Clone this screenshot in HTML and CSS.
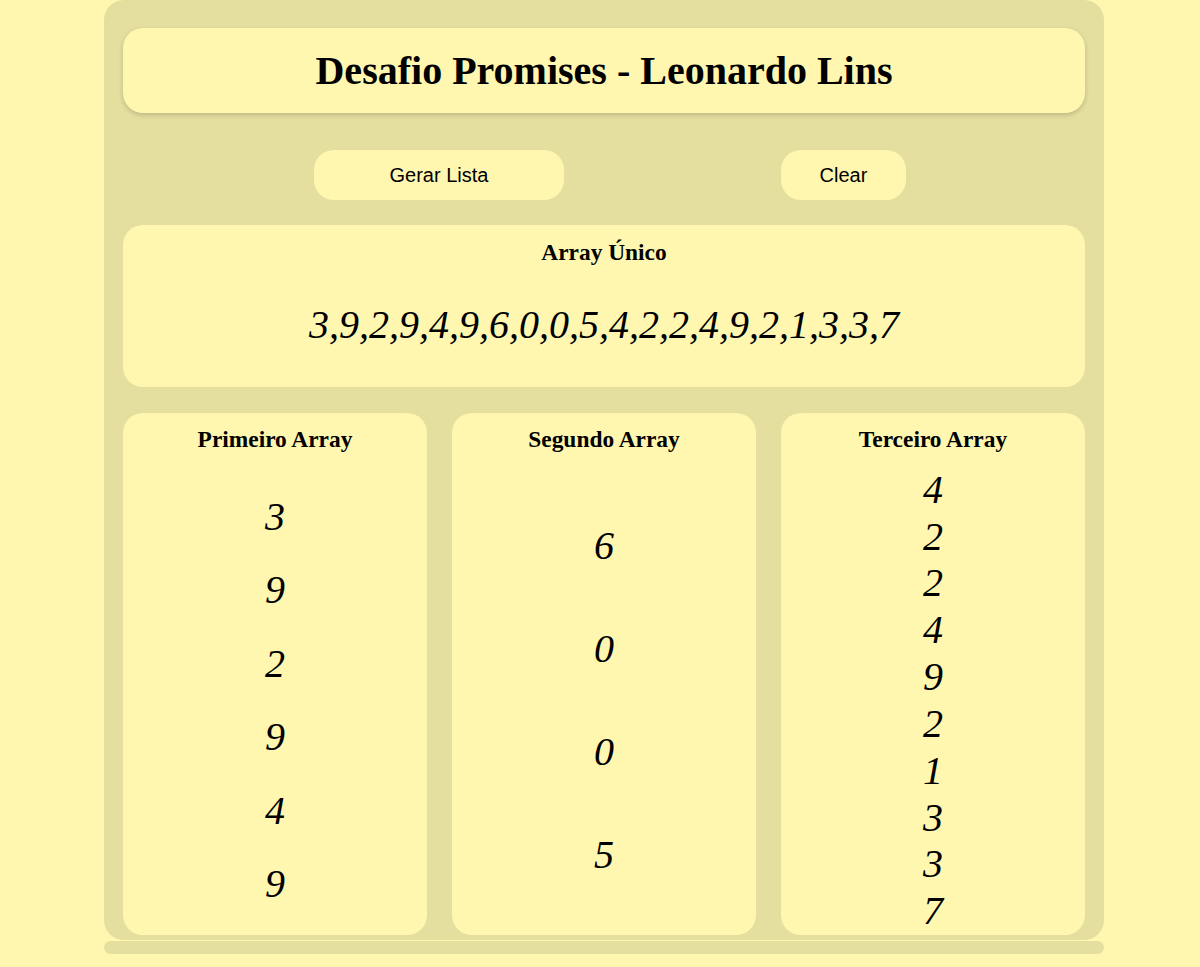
FILE: index.html
```html
<!DOCTYPE html>
<html lang="pt-BR">
<head>
<meta charset="utf-8">
<title>Desafio Promises</title>
<link rel="stylesheet" href="styles.css">
</head>
<body>
<main class="container">
  <header class="header-card">
    <h1 class="title">Desafio Promises - Leonardo Lins</h1>
  </header>
  <div class="actions">
    <button class="btn btn-gerar">Gerar Lista</button>
    <button class="btn btn-clear">Clear</button>
  </div>
  <section class="card unico">
    <h3 class="card-title">Array Único</h3>
    <p class="unico-values">3,9,2,9,4,9,6,0,0,5,4,2,2,4,9,2,1,3,3,7</p>
  </section>
  <div class="columns">
    <section class="card column">
      <h3 class="card-title">Primeiro Array</h3>
      <div class="list">
        <span class="num">3</span><span class="num">9</span><span class="num">2</span><span class="num">9</span><span class="num">4</span><span class="num">9</span>
      </div>
    </section>
    <section class="card column">
      <h3 class="card-title">Segundo Array</h3>
      <div class="list">
        <span class="num">6</span><span class="num">0</span><span class="num">0</span><span class="num">5</span>
      </div>
    </section>
    <section class="card column">
      <h3 class="card-title">Terceiro Array</h3>
      <div class="list">
        <span class="num">4</span><span class="num">2</span><span class="num">2</span><span class="num">4</span><span class="num">9</span><span class="num">2</span><span class="num">1</span><span class="num">3</span><span class="num">3</span><span class="num">7</span>
      </div>
    </section>
  </div>
</main>
<div class="footer-bar"></div>
</body>
</html>
```

FILE: styles.css
```css
html, body {
  margin: 0;
  padding: 0;
  background: #fff7b0;
  font-family: "Liberation Serif", "Times New Roman", serif;
  color: #000;
}

.container {
  width: 1000px;
  box-sizing: border-box;
  margin-left: 104px;
  background: #e4df9f;
  border-radius: 20px;
  padding: 28px 19px 5px;
}

.header-card {
  background: #fff7b0;
  border-radius: 20px;
  box-shadow: 0 2px 5px rgba(0, 0, 0, 0.18);
  height: 85px;
  display: flex;
  align-items: center;
  justify-content: center;
}

.title {
  margin: 0;
  font-size: 40px;
  line-height: 46px;
  font-weight: bold;
}

.actions {
  display: flex;
  padding-left: 191px;
  gap: 217px;
  margin-top: 37px;
}

.btn {
  border: none;
  background: #fff7b0;
  border-radius: 20px;
  height: 50px;
  font-family: "Liberation Sans", Arial, sans-serif;
  font-size: 20px;
  color: #000;
  padding: 0;
}

.btn-gerar { width: 250px; }
.btn-clear { width: 125px; }

.card {
  background: #fff7b0;
  border-radius: 20px;
  text-align: center;
}

.card-title {
  margin: 0;
  font-size: 23.4px;
  line-height: 26px;
  font-weight: bold;
}

.unico {
  margin-top: 25px;
  height: 162px;
  box-sizing: border-box;
  padding-top: 14px;
}

.unico-values {
  margin: 37px 0 0;
  font-size: 40px;
  line-height: 46px;
  font-style: italic;
}

.columns {
  margin-top: 26px;
  display: grid;
  grid-template-columns: repeat(3, 1fr);
  gap: 25px;
}

.column {
  height: 522px;
  display: flex;
  flex-direction: column;
  padding-top: 13px;
  box-sizing: border-box;
}

.column .card-title {
  margin-bottom: 14px;
}

.list {
  flex: 1;
  display: flex;
  flex-direction: column;
  justify-content: space-evenly;
  align-items: center;
}

.num {
  font-size: 40px;
  line-height: 46px;
  font-style: italic;
}

.footer-bar {
  width: 1000px;
  margin: 1px 0 0 104px;
  height: 13px;
  border-radius: 7px;
  background: #e4df9f;
}
```
